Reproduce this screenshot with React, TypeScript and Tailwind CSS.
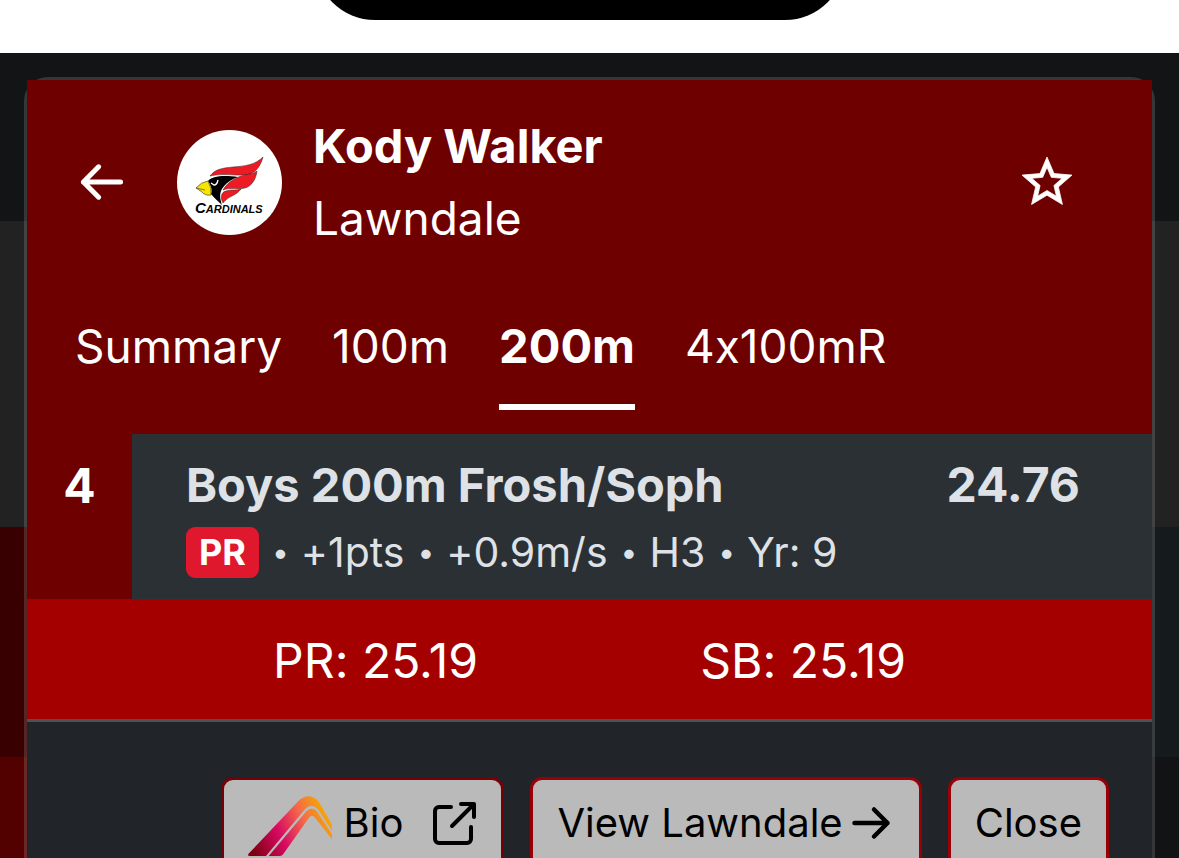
type Tab = { label: string; href: string };

const tabs: Tab[] = [
  { label: "Summary", href: "#summary" },
  { label: "100m", href: "#100m" },
  { label: "200m", href: "#200m" },
  { label: "4x100mR", href: "#4x100mr" },
];

const details = ["+1pts", "+0.9m/s", "H3", "Yr: 9"];

function ArrowLeft({ className }: { className?: string }) {
  return (
    <svg viewBox="0 0 256 256" fill="none" stroke="currentColor" strokeWidth="24" strokeLinecap="round" strokeLinejoin="round" className={className} aria-hidden="true">
      <path d="M216 128H40M112 56 40 128l72 72" />
    </svg>
  );
}

function Star() {
  return (
    <svg viewBox="0 0 24 24" fill="currentColor" stroke="currentColor" strokeWidth="0.3" className="size-15" aria-hidden="true">
      <path d="m22 9.24-7.19-.62L12 2 9.19 8.63 2 9.24l5.46 4.73L5.82 21 12 17.27 18.18 21l-1.63-7.03L22 9.24zM12 15.4l-3.76 2.27 1-4.28-3.32-2.88 4.38-.38L12 6.1l1.71 4.04 4.38.38-3.32 2.88 1 4.28L12 15.4z" />
    </svg>
  );
}

function ExternalLink() {
  return (
    <svg viewBox="0 0 44 44" fill="none" stroke="currentColor" strokeWidth="4" strokeLinecap="round" strokeLinejoin="round" className="size-11" aria-hidden="true">
      <path d="M18 6H6a4 4 0 0 0-4 4v28a4 4 0 0 0 4 4h28a4 4 0 0 0 4-4V26" />
      <path d="M28 3h13v13M41 3 19 25" />
    </svg>
  );
}

function BioLogo() {
  return (
    <svg viewBox="0 0 252 180" className="mt-[6px] w-21" aria-hidden="true">
      <defs>
        <linearGradient id="bio" gradientUnits="userSpaceOnUse" x1="20" y1="180" x2="250" y2="70">
          <stop offset="0" stopColor="#7d0010" />
          <stop offset="0.38" stopColor="#d80a62" />
          <stop offset="0.7" stopColor="#f4694a" />
          <stop offset="1" stopColor="#f5ab00" />
        </linearGradient>
      </defs>
      <path fill="url(#bio)" d="M1 174 152 14Q180-12 208 12Q213 16 252 86V104L210 40Q192 20 172 38L54 180H4Q-1 180 1 174Z" />
      <path fill="url(#bio)" d="M62 180 176 45Q192 30 206 45L252 114V130L200 64Q192 54 184 64L106 174Q102 180 96 180Z" />
    </svg>
  );
}

function CardinalsLogo() {
  return (
    <svg viewBox="0 0 105 105" className="size-[105px] shrink-0 rounded-full bg-white" role="img" aria-label="Cardinals">
      <path fill="#ed1c24" stroke="#222" strokeWidth="0.5" d="M33 46C38 39 46 38 56 37C68 36 78 35 86 27C84 34 81 40 75 43C65 48 50 42 33 46Z" />
      <path fill="#ed1c24" stroke="#222" strokeWidth="0.5" d="M46 60C50 53 56 49 64 46C71 44 76 44 80 41C79 49 75 56 68 58C60 60 53 57 46 60Z" />
      <path fill="#ed1c24" stroke="#222" strokeWidth="0.5" d="M46 73C43 68 44 62 49 61C54 59 58 61 64 59C59 66 51 66 46 73Z" />
      <path fill="#000" d="M31 51C35 46 46 45 61 47C52 50 46 56 44 61C42 66 44 72 45 75C41 71 37 68 34 64Q36 58 31 51Z" />
      <path fill="#f7e500" stroke="#333" strokeWidth="0.6" d="M19 58Q24 52 31 51Q35 58 34 65Q28 66 25 62Z" />
      <path stroke="#333" strokeWidth="0.6" fill="none" d="m19 58 9 2" />
      <path stroke="#fff" strokeWidth="1.4" fill="none" d="m34 53 3 2q3 0 4-5" />
      <text x="18" y="83" fontFamily="Liberation Sans, Arial, sans-serif" fontWeight="700" fontStyle="italic" fontSize="15">
        C<tspan fontSize="11">ARDINALS</tspan>
      </text>
    </svg>
  );
}

function Backdrop() {
  return (
    <div className="col-start-1 row-start-1" aria-hidden="true">
      <div className="h-[168px] bg-[#121416]" />
      <div className="h-[306px] bg-[#222222]" />
      <div className="flex h-[230px]">
        <div className="flex-1 bg-[#380000]" />
        <div className="flex-1 bg-[#151a1d]" />
      </div>
      <div className="flex h-[200px]">
        <div className="flex-1 bg-[#520000]" />
        <div className="flex-1 bg-[#121315]" />
      </div>
    </div>
  );
}

export default function App() {
  return (
    <div className="h-screen overflow-hidden bg-[#121416] font-['Inter',sans-serif] [font-feature-settings:'calt'_0]">
      <div className="flex h-[53px] items-start justify-center bg-white pr-5">
        <div className="h-5 w-[530px] overflow-hidden">
          <div className="-mt-[100px] h-[120px] rounded-[60px] bg-black" />
        </div>
      </div>

      <div className="grid">
        <Backdrop />

        <div role="dialog" aria-label="Kody Walker" className="col-start-1 row-start-1 mx-6 mt-6 rounded-3xl border-[3px] border-white/15 bg-[#212529] bg-clip-padding">
          {/* Athlete header */}
          <header className="bg-[#6f0000] text-white">
            <div className="flex items-center px-12 pt-[30px]">
              <button type="button" aria-label="Back">
                <ArrowLeft className="size-[54px]" />
              </button>
              <div className="ml-12 flex flex-1 items-center gap-[31px]">
                <CardinalsLogo />
                <div className="text-[46px] leading-[72px]">
                  <h1 className="text-[47px] font-bold">Kody Walker</h1>
                  <p>Lawndale</p>
                </div>
              </div>
              <button type="button" aria-label="Favorite" className="mr-[27px]">
                <Star />
              </button>
            </div>

            <nav className="mt-14 flex gap-[50px] px-12 pb-6 text-[46px] leading-[72px]">
              {tabs.map((tab) => (
                <a
                  key={tab.label}
                  href={tab.href}
                  className={
                    tab.label === "200m"
                      ? "border-b-[6px] border-white pb-[22px] text-[47px] font-bold"
                      : "border-b-[6px] border-transparent pb-[22px]"
                  }
                >
                  {tab.label}
                </a>
              ))}
            </nav>
          </header>

          {/* Result */}
          <div className="flex">
            <div className="w-[105px] bg-[#6f0000] pt-4 text-center text-5xl leading-[72px] font-bold text-white">4</div>
            <div className="flex-1 bg-[#2b3035] px-[54px] pt-4 pb-[14px] text-[#dee2e6]">
              <div className="flex justify-between pr-[18px] text-5xl leading-[70px] font-bold">
                <h2 className="text-[47px]">Boys 200m Frosh/Soph</h2>
                <span>24.76</span>
              </div>
              <div className="flex items-center gap-[13px] text-[41px] leading-[65px]">
                <span className="rounded-[9px] bg-[#e0182d] px-[13px] text-4xl leading-[51px] font-bold text-white">PR</span>
                {details.map((detail) => (
                  <span key={detail} className="flex gap-3">
                    <span className="text-3xl leading-[65px]">•</span>
                    {detail}
                  </span>
                ))}
              </div>
            </div>
          </div>

          <div className="flex justify-around bg-[#a50000] px-[135px] pt-[26px] pb-[22px] text-5xl leading-[72px] text-white">
            <span>PR: 25.19</span>
            <span>SB: 25.19</span>
          </div>

          <footer className="flex justify-end gap-[26px] border-t-[3px] border-[#4d5154] pt-[55px] pr-[43px] pb-12 text-[40px] leading-[60px] text-black">
            <button type="button" className="flex items-center rounded-xl border-[3px] border-[#750006] bg-[#bababa] px-6 pt-[10px] pb-3">
              <BioLogo />
              <span className="mr-[30px] ml-3">Bio</span>
              <ExternalLink />
            </button>
            <button type="button" className="flex items-center gap-1 rounded-xl border-[3px] border-[#980008] bg-[#bababa] px-6 pt-[10px] pb-3">
              View Lawndale
              <ArrowLeft className="size-12 rotate-180" />
            </button>
            <button type="button" className="rounded-xl border-[3px] border-[#980008] bg-[#bababa] px-6 pt-[10px] pb-3">
              Close
            </button>
          </footer>
        </div>
      </div>
    </div>
  );
}
